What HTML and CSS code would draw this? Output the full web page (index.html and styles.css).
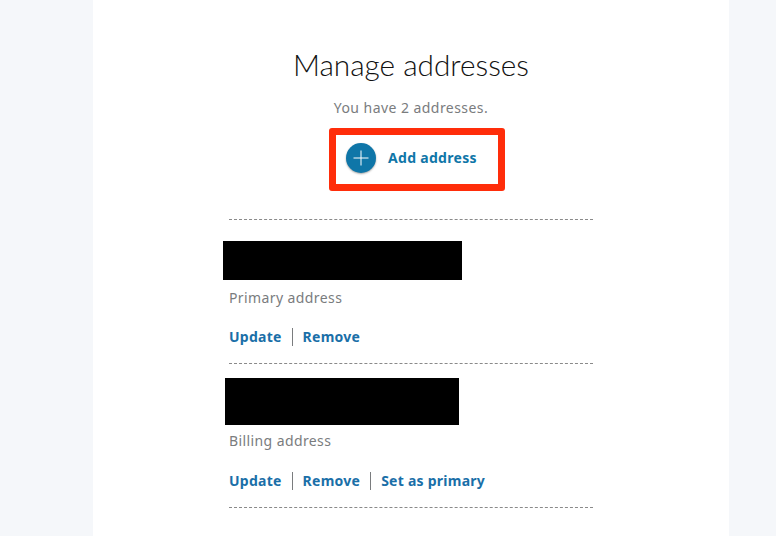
FILE: index.html
```html
<!DOCTYPE html>
<html lang="en">
<head>
	<meta charset="UTF-8">
	<meta name="viewport" content="width=device-width, initial-scale=1.0">
	<title>Manage addresses</title>
	<link rel="stylesheet" href="styles.css">
</head>
<body>
<div class="card">
	<h1>Manage addresses</h1>
	<p class="count">You have 2 addresses.</p>
	<div class="add-row">
		<a class="add-box" href="#">
			<span class="add-icon">
				<svg width="30" height="30" viewBox="0 0 30 30"><path d="M15 7.5v15M7.5 15h15" stroke="#fff" stroke-width="1" fill="none"/></svg>
			</span>
			<span class="add-label">Add address</span>
		</a>
	</div>

	<div class="list">
		<div class="address first">
			<div class="redact redact-one"></div>
			<p class="kind kind-one">Primary address</p>
			<div class="links">
				<a href="#">Update</a>
				<a href="#">Remove</a>
			</div>
		</div>
		<div class="address second">
			<div class="redact redact-two"></div>
			<p class="kind kind-two">Billing address</p>
			<div class="links">
				<a href="#">Update</a>
				<a href="#">Remove</a>
				<a href="#">Set as primary</a>
			</div>
		</div>
	</div>
</div>
</body>
</html>
```

FILE: styles.css
```css
html, body {
	height: 100%;
}

body {
	margin: 0;
	background: #f5f7fa;
	font-family: "Noto Sans", "Open Sans", sans-serif;
	overflow: hidden;
}

.card {
	box-sizing: border-box;
	width: 636px;
	height: 536px;
	margin-left: 93px;
	padding-top: 44px;
	background: #fff;
}

h1 {
	margin: 0;
	text-align: center;
	font-family: Lato, sans-serif;
	font-weight: 300;
	font-size: 29.75px;
	line-height: 42px;
	color: #111;
}

.count {
	margin: 12px 0 0;
	text-align: center;
	font-size: 14px;
	line-height: 20px;
	letter-spacing: 0.45px;
	color: #7a7c7e;
}

.add-row {
	display: flex;
	justify-content: center;
	margin-top: 10px;
}

.add-box {
	box-sizing: border-box;
	display: flex;
	align-items: center;
	width: 176px;
	height: 63px;
	margin-left: 12px;
	padding: 0 0 4px 10px;
	border: 7px solid #ff2d0a;
	border-radius: 3px;
	text-decoration: none;
}

.add-icon {
	display: block;
	width: 30px;
	height: 30px;
	border-radius: 50%;
	background: #0f76a8;
	box-shadow: 0 1px 2px rgba(0, 0, 0, 0.35);
}

.add-icon svg {
	display: block;
}

.add-label {
	margin-left: 12px;
	font-size: 14px;
	font-weight: 700;
	letter-spacing: 0.3px;
	color: #0f76a8;
}

.list {
	width: 364px;
	margin: 28px 0 0 136px;
}

.address {
	border-top: 1px dashed #8a8a8a;
}

.address.second {
	border-bottom: 1px dashed #8a8a8a;
}

.redact {
	background: #000;
}

.redact-one {
	width: 239px;
	height: 39px;
	margin: 21px 0 0 -6px;
}

.redact-two {
	width: 234px;
	height: 47px;
	margin: 14px 0 0 -4px;
}

.kind {
	margin: 8px 0 0;
	font-size: 14px;
	line-height: 20px;
	letter-spacing: 0.4px;
	color: #7a7c7e;
}

.kind-two {
	margin-top: 6px;
}

.links {
	display: flex;
	align-items: center;
	margin-top: 19px;
	height: 20px;
	padding-bottom: 16px;
	box-sizing: content-box;
}

.second .links {
	margin-top: 20px;
}

.links a {
	font-size: 14px;
	font-weight: 700;
	line-height: 18px;
	letter-spacing: 0.25px;
	color: #1a6fa8;
	text-decoration: none;
}

.links a + a {
	margin-left: 10px;
	padding-left: 10px;
	border-left: 1px solid #7a7c7e;
}
```
